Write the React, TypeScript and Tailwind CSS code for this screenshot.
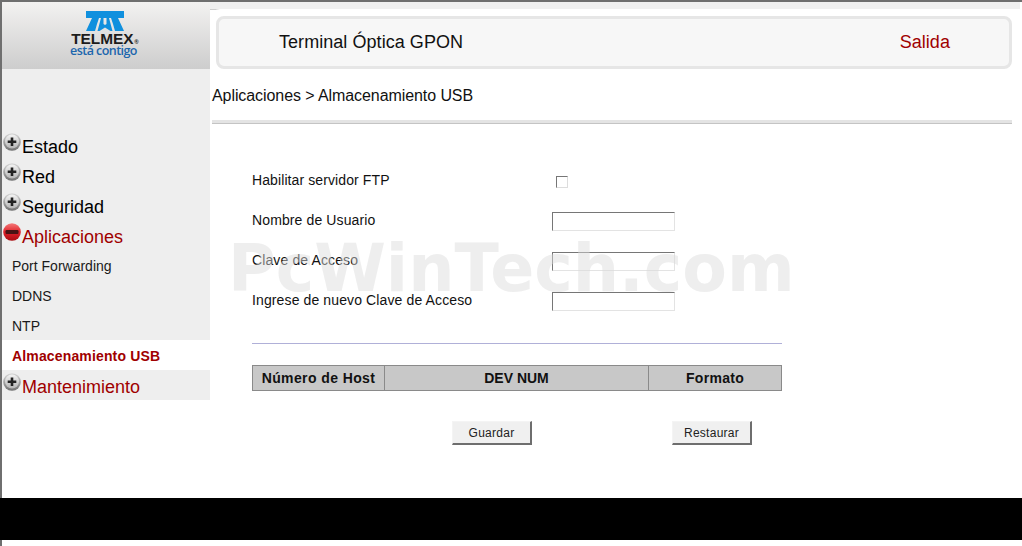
const font = "font-['Liberation_Sans',Arial,sans-serif]"

function Bullet({ open }: { open?: boolean }) {
  return (
    <svg width="18" height="18" viewBox="0 0 18 18" className="shrink-0">
      <defs>
        <linearGradient id="ringGray" x1="0" y1="0" x2="0" y2="1">
          <stop offset="0%" stopColor="#d8d8d8" />
          <stop offset="100%" stopColor="#707070" />
        </linearGradient>
        <linearGradient id="coreGray" x1="0" y1="0" x2="0" y2="1">
          <stop offset="0%" stopColor="#f4f4f4" />
          <stop offset="100%" stopColor="#b4b4b4" />
        </linearGradient>
        <linearGradient id="bulletRed" x1="0" y1="0" x2="0" y2="1">
          <stop offset="0%" stopColor="#f47a7a" />
          <stop offset="50%" stopColor="#e0222a" />
          <stop offset="100%" stopColor="#a80d12" />
        </linearGradient>
      </defs>
      <circle cx="9" cy="9" r="8.8" fill={open ? "url(#bulletRed)" : "url(#ringGray)"} />
      {!open && <circle cx="9" cy="8.5" r="7" fill="url(#coreGray)" />}
      {open ? (
        <rect x="2.500" y="7" width="13" height="4" rx="1.200" fill="#4a1414" />
      ) : (
        <path d="M7.700 4.500h2.600v3h3v2.600h-3v3H7.700v-3h-3V7.500h3z" fill="#222222" />
      )}
    </svg>
  )
}

function MenuItem({ label, open, red }: { label: string; open?: boolean; red?: boolean }) {
  return (
    <div className={`flex h-[30px] pl-px text-[18px] leading-[30px] ${red ? "text-[#a00000]" : "text-black"}`}>
      <div className="pt-[3px]">
        <Bullet open={open} />
      </div>
      <span className="pl-px pt-[2px]">{label}</span>
    </div>
  )
}

function SubItem({ label, active }: { label: string; active?: boolean }) {
  return (
    <div
      className={`h-[30px] pt-px pl-[10px] text-[14px] leading-[30px] ${
        active ? "bg-white font-bold tracking-[0.15px] text-[#a00000]" : "text-[#1a1a1a]"
      }`}
    >
      {label}
    </div>
  )
}

function Logo() {
  return (
    <div className="flex h-[67px] flex-col items-center bg-gradient-to-b from-[#f3f2f1] to-[#cdcdcd] pt-[9px] pr-[2px]">
      <svg width="38" height="20" viewBox="0 0 38 20" className="-ml-[1px]">
        <path
          d="M0 0h38v7H0zM6 7h7l-2 6-2 7H0zM32 7h-7l2 6 2 7h9zM15 7h2.500v6l1.500 1 1.500-1V7H23l3.500 13h-2L19 16.500 13.500 20h-2z"
          fill="#1090de"
        />
      </svg>
      <div className="mt-[3px] flex h-[11px] items-end pl-[3px] text-[14px] leading-[11px] font-bold text-[#1c1c1c]">
        <span className="inline-block scale-x-[1.1]">TELMEX</span>
        <span className="ml-[3px] text-[6px] leading-[6px]">®</span>
      </div>
      <div className="-ml-[3px] font-['Open_Sans',sans-serif] text-[12.5px] leading-[12px] font-semibold tracking-[-0.55px] text-[#1d66ad]">
        está contigo
      </div>
    </div>
  )
}

function Field({ label }: { label: string }) {
  return (
    <div className="flex h-[40px] items-center">
      <span className="w-[300px] pb-px tracking-[0.12px]">{label}</span>
      <input
        type="text"
        className="h-[19px] w-[123px] border border-t-[#767676] border-r-[#e3e3e3] border-b-[#e3e3e3] border-l-[#767676] bg-white"
      />
    </div>
  )
}

function Button({ label }: { label: string }) {
  return (
    <button className="h-[24px] w-[80px] border-t border-r-2 border-b-2 border-l border-t-[#f4f4f4] border-r-[#6e6e6e] border-b-[#6e6e6e] border-l-[#f4f4f4] bg-[#f0f0f0] text-[12px] tracking-[0.25px] text-[#222]">
      {label}
    </button>
  )
}

export default function App() {
  return (
    <div className={`${font} relative h-[546px] w-[1022px] overflow-hidden bg-white`}>
      <div className="flex h-[498px] border-t-2 border-l-2 border-[#6f6f6f]">
        <aside className="flex w-[208px] shrink-0 flex-col">
          <Logo />
          <div className="bg-[#eeeeee] pt-[61px]">
            <MenuItem label="Estado" />
            <MenuItem label="Red" />
            <MenuItem label="Seguridad" />
            <MenuItem label="Aplicaciones" open red />
            <SubItem label="Port Forwarding" />
            <SubItem label="DDNS" />
            <SubItem label="NTP" />
            <SubItem label="Almacenamiento USB" active />
            <MenuItem label="Mantenimiento" red />
          </div>
        </aside>

        <main className="flex-1">
          <div className="mr-[2px] h-[8px] border-b border-[#cfcfcf] bg-[#f0f0f0]"></div>
          <div className="-mt-px rounded-tl-[10px] bg-white pt-[7px] pr-[10px] pl-[2px]">
            <div className="ml-[4px] flex h-[53px] items-center justify-between rounded-[8px] border-[3px] border-[#e6e6e6] bg-[#f7f7f7] pr-[59px] pl-[60px] text-[18px] tracking-[0.05px] text-[#111]">
              <span>Terminal Óptica GPON</span>
              <span className="text-[#a00000]">Salida</span>
            </div>
            <div className="h-[51px] pt-[17px] text-[16px] leading-[20px] tracking-[-0.08px] text-[#111]">
              Aplicaciones &gt; Almacenamiento USB
            </div>
            <div className="h-[4px] border-b border-[#c4c4c4] bg-[#e4e4e4]"></div>
          </div>

          <div className="pt-[37px] pl-[42px] text-[14px] text-[#111]">
            <div className="flex h-[40px] items-center">
              <span className="w-[304px] pb-[1px] tracking-[0.1px]">Habilitar servidor FTP</span>
              <span className="mt-[1px] h-[12px] w-[12px] border border-t-[#767676] border-r-[#dddddd] border-b-[#dddddd] border-l-[#767676] bg-white"></span>
            </div>
            <Field label="Nombre de Usuario" />
            <Field label="Clave de Acceso" />
            <Field label="Ingrese de nuevo Clave de Acceso" />

            <div className="mt-[22px] h-px w-[530px] bg-[#b0b0d8]"></div>

            <div className="mt-[21px] flex h-[26px] w-[530px] border border-[#8a8a8a] bg-[#c8c8c8] text-center leading-[24px] font-bold text-[#111]">
              <div className="w-[132px] border-r border-[#8a8a8a] tracking-[0.4px]">Número de Host</div>
              <div className="w-[264px] border-r border-[#8a8a8a]">DEV NUM</div>
              <div className="flex-1 tracking-[0.3px]">Formato</div>
            </div>

            <div className="mt-[30px] flex gap-[140px] pl-[200px]">
              <Button label="Guardar" />
              <Button label="Restaurar" />
            </div>
          </div>
        </main>
      </div>

      <div className="h-[42px] bg-black"></div>
      <div className="h-[6px] border-l-2 border-[#6f6f6f]"></div>

      <div className="pointer-events-none absolute top-[231px] left-[228px] font-['DejaVu_Sans',sans-serif] text-[65px] leading-[76px] font-bold whitespace-nowrap text-[rgba(218,218,218,0.47)]">
        PcWinTech.com
      </div>
    </div>
  )
}
